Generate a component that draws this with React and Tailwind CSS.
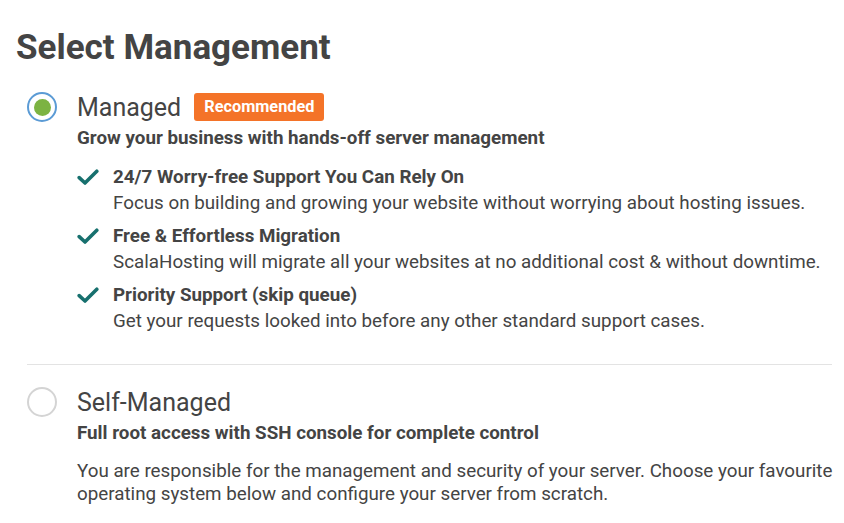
import React from 'react';

const features = [
  {
    title: '24/7 Worry-free Support You Can Rely On',
    text: 'Focus on building and growing your website without worrying about hosting issues.',
  },
  {
    title: 'Free & Effortless Migration',
    text: 'ScalaHosting will migrate all your websites at no additional cost & without downtime.',
  },
  {
    title: 'Priority Support (skip queue)',
    text: 'Get your requests looked into before any other standard support cases.',
  },
];

function Check() {
  return (
    <svg width="22" height="17" viewBox="0 0 22 17" className="shrink-0 mt-[5px]">
      <path d="M2.2 8.6 L8 14 L19.8 2.2" fill="none" stroke="#17706e" strokeWidth="3.6" strokeLinecap="round" strokeLinejoin="round" />
    </svg>
  );
}

function Radio({ checked }) {
  return (
    <div
      className={
        checked
          ? 'w-[30px] h-[30px] rounded-full border-2 border-[#5b9bd5] bg-white flex items-center justify-center shrink-0'
          : 'w-[30px] h-[30px] rounded-full border-2 border-[#d4d4d4] bg-white shrink-0'
      }
    >
      {checked && <div className="w-[17px] h-[17px] rounded-full bg-[#7cb342]" />}
    </div>
  );
}

export default function App() {
  return (
    <div className="w-[844px] h-[523px] bg-white text-[#444] overflow-hidden font-['Roboto',sans-serif] pl-4">
      <h1 className="text-[35px] font-bold leading-none pt-[30px] text-[#444]">Select Management</h1>

      {/* Managed */}
      <div className="flex gap-[20px] pl-[11px] mt-[27px]">
        <Radio checked />
        <div className="flex-1">
          <div className="flex items-center gap-[13px] h-[30px]">
            <span className="text-[25px] leading-none">Managed</span>
            <span className="bg-[#f47328] text-white font-bold text-[16.3px] leading-none rounded-[3px] px-[10px] h-[28px] flex items-center">
              Recommended
            </span>
          </div>
          <p className="text-[18.8px] font-bold leading-[22px] mt-[5px]">Grow your business with hands-off server management</p>

          <ul className="mt-[15px] flex flex-col gap-[7px]">
            {features.map((f) => (
              <li key={f.title} className="flex gap-[14px]">
                <Check />
                <div>
                  <div className="text-[18.8px] font-bold leading-[26px]">{f.title}</div>
                  <div className="text-[18.8px] leading-[26px]">{f.text}</div>
                </div>
              </li>
            ))}
          </ul>
        </div>
      </div>

      <div className="border-t border-[#e3e3e3] ml-[11px] mr-[12px] mt-[30px]" />

      {/* Self-Managed */}
      <div className="flex gap-[20px] pl-[11px] mt-[22px]">
        <Radio />
        <div className="flex-1">
          <div className="flex items-center h-[30px]">
            <span className="text-[25px] leading-none">Self-Managed</span>
          </div>
          <p className="text-[18.8px] font-bold leading-[22px] mt-[5px]">Full root access with SSH console for complete control</p>
          <p className="text-[18.8px] leading-[23px] mt-[16px]">
            You are responsible for the management and security of your server. Choose your favourite operating system below and configure your server from scratch.
          </p>
        </div>
      </div>
    </div>
  );
}
